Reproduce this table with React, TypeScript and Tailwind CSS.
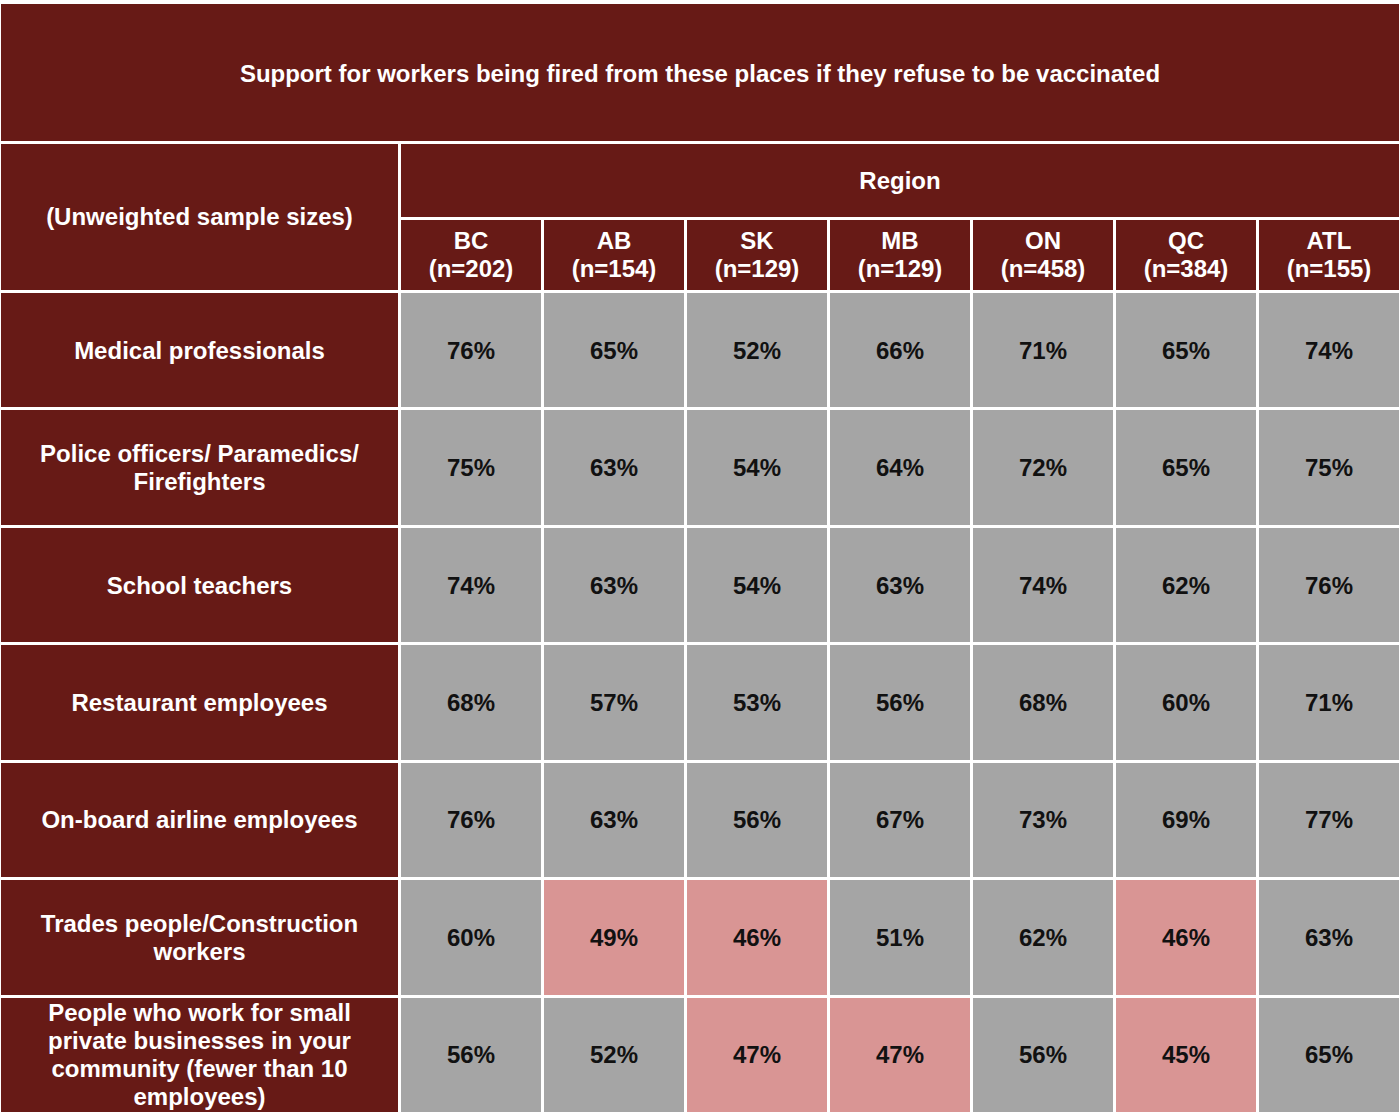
import React from "react";

const regions = [
  ["BC", "(n=202)"],
  ["AB", "(n=154)"],
  ["SK", "(n=129)"],
  ["MB", "(n=129)"],
  ["ON", "(n=458)"],
  ["QC", "(n=384)"],
  ["ATL", "(n=155)"],
];

type Row = { label: string; values: string[]; pink: number[] };

const rows: Row[] = [
  { label: "Medical professionals", values: ["76%", "65%", "52%", "66%", "71%", "65%", "74%"], pink: [] },
  { label: "Police officers/ Paramedics/ Firefighters", values: ["75%", "63%", "54%", "64%", "72%", "65%", "75%"], pink: [] },
  { label: "School teachers", values: ["74%", "63%", "54%", "63%", "74%", "62%", "76%"], pink: [] },
  { label: "Restaurant employees", values: ["68%", "57%", "53%", "56%", "68%", "60%", "71%"], pink: [] },
  { label: "On-board airline employees", values: ["76%", "63%", "56%", "67%", "73%", "69%", "77%"], pink: [] },
  { label: "Trades people/Construction workers", values: ["60%", "49%", "46%", "51%", "62%", "46%", "63%"], pink: [1, 2, 5] },
  {
    label: "People who work for small private businesses in your community (fewer than 10 employees)",
    values: ["56%", "52%", "47%", "47%", "56%", "45%", "65%"],
    pink: [2, 3, 5],
  },
];

export default function App() {
  return (
    <div
      className="w-[1400px] h-[1116px] bg-white pt-[4px] pl-[1px]"
      style={{ fontFamily: '"Liberation Sans", Arial, Helvetica, sans-serif' }}
    >
      <div className="grid w-[1398px] h-[1108px] gap-[3px] grid-cols-[397px_repeat(7,1fr)] grid-rows-[137px_73px_70px_repeat(7,1fr)] text-[24px] leading-[28px] font-bold">
        <div className="col-span-8 bg-[#671a16] text-white flex items-center justify-center text-center pt-[2px]">
          Support for workers being fired from these places if they refuse to be vaccinated
        </div>
        <div className="row-span-2 bg-[#671a16] text-white flex items-center justify-center text-center">
          (Unweighted sample sizes)
        </div>
        <div className="col-span-7 bg-[#671a16] text-white flex items-center justify-center">Region</div>
        {regions.map(([r, n]) => (
          <div key={r} className="bg-[#671a16] text-white flex flex-col items-center justify-center text-center">
            <span>{r}</span>
            <span>{n}</span>
          </div>
        ))}
        {rows.map((row) => (
          <React.Fragment key={row.label}>
            <div className="bg-[#671a16] text-white flex items-center justify-center text-center px-[36px] pt-[1px]">
              {row.label}
            </div>
            {row.values.map((v, i) => (
              <div
                key={i}
                className={
                  row.pink.includes(i)
                    ? "bg-[#d99594] text-[#111111] flex items-center justify-center pt-[1px]"
                    : "bg-[#a5a5a5] text-[#111111] flex items-center justify-center pt-[1px]"
                }
              >
                {v}
              </div>
            ))}
          </React.Fragment>
        ))}
      </div>
    </div>
  );
}
